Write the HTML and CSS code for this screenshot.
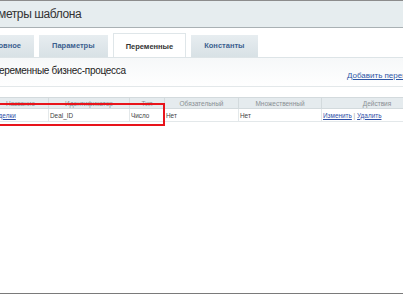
FILE: index.html
```html
<!DOCTYPE html>
<html lang="ru">
<head>
    <meta charset="UTF-8">
    <title>Параметры шаблона</title>
    <link rel="stylesheet" href="styles.css">
</head>
<body>
    <div class="page">
        <div class="title-bar">Параметры шаблона</div>

        <div class="tabs">
            <span class="tab">Основное</span>
            <span class="tab">Параметры</span>
            <span class="tab tab-active">Переменные</span>
            <span class="tab">Константы</span>
        </div>

        <div class="content">
            <div class="content-head">
                <h2>Переменные бизнес-процесса</h2>
                <a href="#" class="add-link">Добавить переменную</a>
            </div>

            <table class="vars">
                <colgroup>
                    <col class="c-name">
                    <col class="c-id">
                    <col class="c-type">
                    <col class="c-req">
                    <col class="c-multi">
                    <col class="c-act">
                </colgroup>
                <thead>
                    <tr>
                        <th>Название</th>
                        <th>Идентификатор</th>
                        <th>Тип</th>
                        <th>Обязательный</th>
                        <th>Множественный</th>
                        <th>Действия</th>
                    </tr>
                </thead>
                <tbody>
                    <tr>
                        <td><a href="#">Сделки</a></td>
                        <td>Deal_ID</td>
                        <td>Число</td>
                        <td>Нет</td>
                        <td>Нет</td>
                        <td><a href="#">Изменить</a> <span class="sep">|</span> <a href="#">Удалить</a></td>
                    </tr>
                </tbody>
            </table>
        </div>

        <!-- annotation frame over the first row -->
        <div class="highlight"></div>
    </div>
</body>
</html>
```

FILE: styles.css
```css
html, body {
    height: 100%;
}
body {
    margin: 0;
    overflow: hidden;
    background-color: #fff;
    font-family: 'Liberation Sans', Arial, sans-serif;
    color: #333;
    box-sizing: border-box;
    border-top: 1px solid #8c8c8c;
    border-bottom: 1px solid #7a7a7a;
}
.page {
    position: relative;
    margin-left: -41px;
    width: 520px;
}
.title-bar {
    height: 26px;
    line-height: 26px;
    padding-left: 12px;
    font-size: 12px;
    letter-spacing: -0.4px;
    color: #333;
    background-color: #e6edef;
    border-bottom: 1px solid #a9b1b4;
}
.tabs {
    display: flex;
    align-items: flex-end;
    gap: 5px;
    height: 24px;
    padding: 5px 0 0 12px;
    border-bottom: 1px solid #dde4e7;
}
.tab {
    height: 22px;
    line-height: 22px;
    padding: 0 13px;
    font-size: 7.5px;
    font-weight: bold;
    color: #3b5f8f;
    background: linear-gradient(#e7edf0, #d8e1e5);
}
.tab-active {
    height: 24px;
    line-height: 25px;
    padding: 0 12px;
    color: #333;
    background: #fff;
    border: 1px solid #dfe6e9;
    border-bottom: none;
    box-sizing: border-box;
}
.content {
    padding-left: 33px;
    background: linear-gradient(#f6f8f9, #fff 30px);
}
.content-head {
    display: flex;
    justify-content: space-between;
    align-items: flex-start;
    height: 28px;
    border-bottom: 1px solid #e3e8ea;
}
.content-head h2 {
    margin: 7px 0 0;
    font-size: 10px;
    letter-spacing: -0.3px;
    font-weight: normal;
    color: #222;
}
.add-link {
    margin-top: 13px;
    margin-right: 48px;
    font-size: 8px;
    color: #2f57a6;
}
.vars {
    margin-top: 10px;
    border-collapse: collapse;
    table-layout: fixed;
    width: 440px;
}
.c-name { width: 56px; }
.c-id { width: 81px; }
.c-type { width: 35px; }
.c-req { width: 74px; }
.c-multi { width: 83px; }
.c-act { width: 111px; }
.vars th {
    height: 10px;
    padding: 0;
    font-size: 6.5px;
    font-weight: normal;
    color: #8a8f93;
    background-color: #e5ebee;
    border: 1px solid #d3dadd;
    text-align: center;
}
.vars td {
    height: 12px;
    padding: 0 1px;
    font-size: 6.4px;
    color: #444;
    border: 1px solid #e3e8ea;
    white-space: nowrap;
    overflow: hidden;
}
.vars a {
    color: #2f4fa8;
}
.sep {
    color: #999;
}
.highlight {
    position: absolute;
    left: 29px;
    top: 102px;
    width: 173px;
    height: 19px;
    border: 2px solid #e8141b;
}
```
